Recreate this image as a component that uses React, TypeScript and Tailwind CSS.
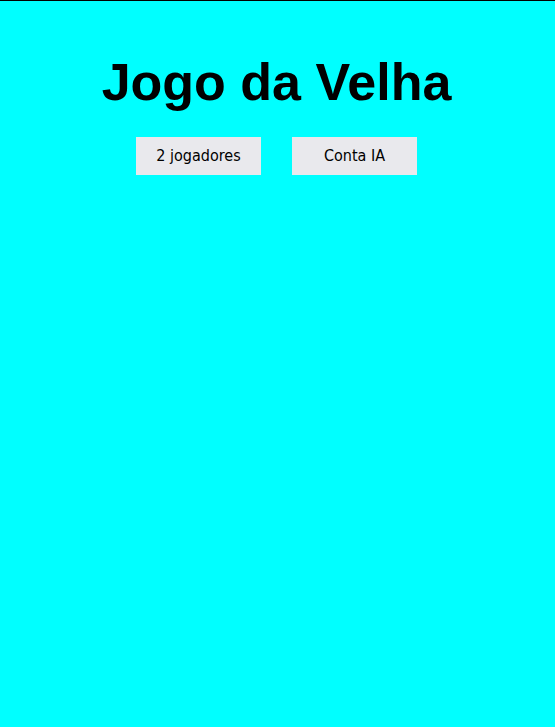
export default function App() {
  return (
    <main className="min-h-[727px] bg-[#00ffff] border-t border-black flex flex-col items-center">
      <h1 className="mt-[55px] mr-[2px] text-[52px] leading-none font-bold text-black font-['Liberation_Sans',Arial,sans-serif]">
        Jogo da Velha
      </h1>
      <div className="mt-[29px] mr-[2px] flex gap-[31px]">
        <button className="w-[125px] h-[38px] bg-[#e9e9ed] text-black text-[16px] font-['DejaVu_Sans_Condensed','DejaVu_Sans',sans-serif] [font-stretch:condensed]">
          2 jogadores
        </button>
        <button className="w-[125px] h-[38px] bg-[#e9e9ed] text-black text-[16px] font-['DejaVu_Sans_Condensed','DejaVu_Sans',sans-serif] [font-stretch:condensed]">
          Conta IA
        </button>
      </div>
    </main>
  );
}
